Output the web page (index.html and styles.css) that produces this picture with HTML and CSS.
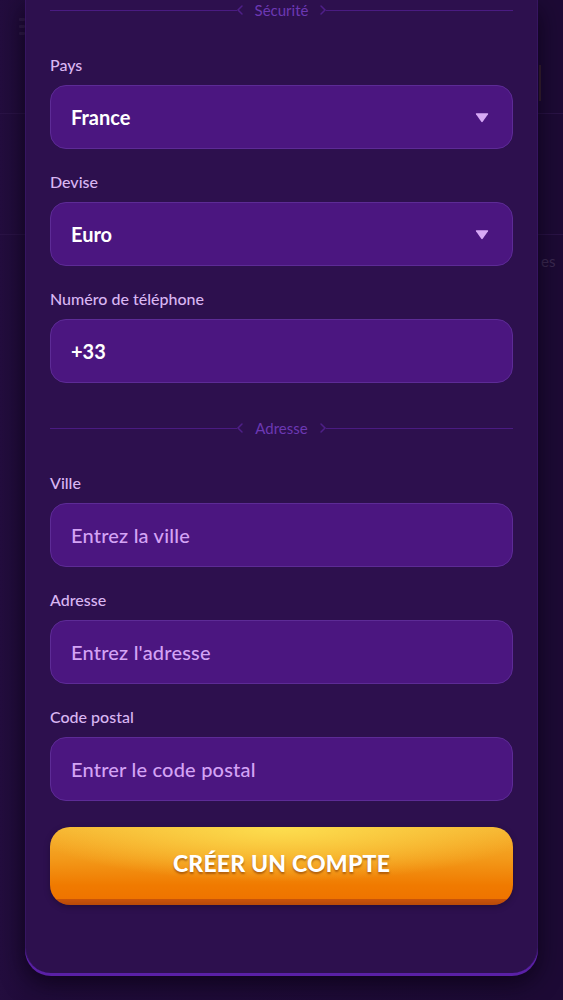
FILE: index.html
```html
<!DOCTYPE html>
<html lang="fr">
<head>
<meta charset="utf-8">
<title>Créer un compte</title>
<link rel="stylesheet" href="styles.css">
</head>
<body>
<div class="backdrop">
  <div class="bg-page">
    <div class="bg-menu"><span></span><span></span><span></span></div>
    <div class="bg-line bg-line-1"></div>
    <div class="bg-line bg-line-2"></div>
    <div class="bg-text">es</div>
    <div class="bg-btn"></div>
  </div>
  <div class="modal">
    <div class="card">
      <div class="divider">
        <span class="line"></span>
        <svg class="chev" width="8" height="12" viewBox="0 0 8 12"><path d="M6 2 L2 6 L6 10" fill="none" stroke="#4e1f88" stroke-width="1.5" stroke-linecap="round"/></svg>
        <span class="divider-text">Sécurité</span>
        <svg class="chev" width="8" height="12" viewBox="0 0 8 12"><path d="M2 2 L6 6 L2 10" fill="none" stroke="#4e1f88" stroke-width="1.5" stroke-linecap="round"/></svg>
        <span class="line"></span>
      </div>

      <div class="field">
        <label class="label">Pays</label>
        <div class="input select"><span class="value">France</span><svg class="caret" width="14" height="11" viewBox="0 0 14 11"><path d="M1.5 1.2 H12.5 Q13.6 1.2 13 2.2 L7.9 9.6 Q7 10.8 6.1 9.6 L1 2.2 Q0.4 1.2 1.5 1.2 Z" fill="#d7a9f6"/></svg></div>
      </div>
      <div class="field">
        <label class="label">Devise</label>
        <div class="input select"><span class="value">Euro</span><svg class="caret" width="14" height="11" viewBox="0 0 14 11"><path d="M1.5 1.2 H12.5 Q13.6 1.2 13 2.2 L7.9 9.6 Q7 10.8 6.1 9.6 L1 2.2 Q0.4 1.2 1.5 1.2 Z" fill="#d7a9f6"/></svg></div>
      </div>
      <div class="field">
        <label class="label">Numéro de téléphone</label>
        <div class="input"><span class="value">+33</span></div>
      </div>

      <div class="divider divider-2">
        <span class="line"></span>
        <svg class="chev" width="8" height="12" viewBox="0 0 8 12"><path d="M6 2 L2 6 L6 10" fill="none" stroke="#4e1f88" stroke-width="1.5" stroke-linecap="round"/></svg>
        <span class="divider-text">Adresse</span>
        <svg class="chev" width="8" height="12" viewBox="0 0 8 12"><path d="M2 2 L6 6 L2 10" fill="none" stroke="#4e1f88" stroke-width="1.5" stroke-linecap="round"/></svg>
        <span class="line"></span>
      </div>

      <div class="field">
        <label class="label">Ville</label>
        <div class="input"><span class="placeholder">Entrez la ville</span></div>
      </div>
      <div class="field">
        <label class="label">Adresse</label>
        <div class="input"><span class="placeholder">Entrez l'adresse</span></div>
      </div>
      <div class="field">
        <label class="label">Code postal</label>
        <div class="input"><span class="placeholder">Entrer le code postal</span></div>
      </div>

      <button class="cta">CRÉER UN COMPTE</button>
    </div>
  </div>
</div>
</body>
</html>
```

FILE: styles.css
```css
* { box-sizing: border-box; }

html, body {
  margin: 0;
  padding: 0;
  background: #1c0933;
  font-family: "Lato", "Liberation Sans", sans-serif;
}

.backdrop {
  position: relative;
  width: 563px;
  height: 1000px;
  overflow: hidden;
  background: linear-gradient(90deg, #230d3e 0px, #200b3a 25px, #1d0a35 540px, #1d0a35 563px);
}

.bg-page {
  position: absolute;
  inset: 0;
  pointer-events: none;
}

.bg-menu {
  position: absolute;
  left: 19px;
  top: 18px;
  display: flex;
  flex-direction: column;
  gap: 4px;
}
.bg-menu span {
  display: block;
  width: 6px;
  height: 3px;
  background: #2f1a48;
  border-radius: 1px;
}

.bg-line {
  position: absolute;
  left: 0;
  right: 0;
  height: 1px;
  background: #2a1346;
}
.bg-line-1 { top: 113px; }
.bg-line-2 { top: 234px; }

.bg-text {
  position: absolute;
  left: 541px;
  top: 252px;
  font-size: 15px;
  color: #3c2a52;
}

.bg-btn {
  position: absolute;
  left: 539px;
  top: 65px;
  width: 2px;
  height: 36px;
  background: #3a2230;
}

.modal {
  position: relative;
  padding: 0 25px;
}

.card {
  width: 513px;
  height: 973px;
  background: #2d104e;
  border-left: 1px solid #361560;
  border-right: 1px solid #361560;
  border-radius: 0 0 26px 26px;
  box-shadow: 0 3px 0 #5a20a6, 0 10px 24px rgba(8, 2, 18, 0.75);
  padding: 0 24px;
  display: flex;
  flex-direction: column;
}

.divider {
  height: 20px;
  display: flex;
  align-items: center;
  margin-bottom: 36px;
}
.divider-2 {
  margin-top: 35px;
  margin-bottom: 36px;
}
.divider .line {
  flex: 1;
  height: 1px;
  background: #4a1b82;
}
.divider .chev {
  flex: none;
  margin: 0 -1px;
}
.divider-text {
  padding: 0 12px;
  font-size: 15px;
  color: #6c38b3;
  line-height: 20px;
}

.field {
  display: flex;
  flex-direction: column;
}
.field + .field {
  margin-top: 24px;
}

.label {
  font-size: 16px;
  line-height: 18px;
  color: #d9b6f2;
  margin-bottom: 11px;
  font-weight: 500;
}

.input {
  height: 64px;
  border-radius: 16px;
  background: #4b1680;
  border: 1px solid #5d2b96;
  display: flex;
  align-items: center;
  justify-content: space-between;
  padding: 0 23px 0 20px;
}

.value {
  font-size: 20px;
  font-weight: 700;
  color: #ffffff;
}

.placeholder {
  font-size: 20px;
  font-weight: 500;
  color: #d4a3f5;
  letter-spacing: 0.2px;
}

.caret {
  display: block;
}

.cta {
  margin-top: 26px;
  height: 78px;
  width: 100%;
  border: none;
  border-radius: 20px;
  padding: 0 0 6px 0;
  background:
    radial-gradient(ellipse 55% 70% at 50% 0%, rgba(253, 224, 80, 0.95) 0%, rgba(253, 224, 80, 0) 100%),
    linear-gradient(180deg, #f6b532 0%, #f39a1a 40%, #f07a00 75%, #ef7400 92%, #c9540a 92.5%, #b84a08 100%);
  color: #ffffff;
  font-family: "Lato", "Liberation Sans", sans-serif;
  font-weight: 900;
  font-size: 23px;
  letter-spacing: 0.2px;
  text-shadow: 0 2px 2px rgba(120, 50, 0, 0.55);
  box-shadow: 0 2px 6px rgba(0, 0, 0, 0.25);
  cursor: pointer;
}
```
